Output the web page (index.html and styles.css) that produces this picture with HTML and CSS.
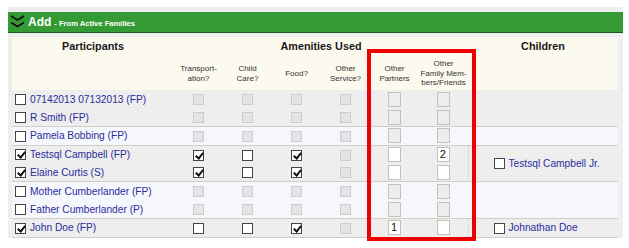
FILE: index.html
```html
<!DOCTYPE html>
<html lang="en">

<head>
    <meta charset="UTF-8">
    <meta name="viewport" content="width=device-width, initial-scale=1.0">
    <title>Add - From Active Families</title>
    <link rel="stylesheet" href="styles.css">
</head>

<body>
    <div class="top-strip"></div>

    <div class="panel">
        <div class="panel-bar">
            <svg class="chevrons" width="15" height="14" viewBox="0 0 15 14">
                <polyline points="1,1 7.5,5 14,1" />
                <polyline points="1,7.5 7.5,11.5 14,7.5" />
            </svg>
            <span class="bar-title">Add</span>
            <span class="bar-sub">- From Active Families</span>
        </div>

        <table class="roster">
            <colgroup>
                <col class="col-name">
                <col class="col-amenity">
                <col class="col-amenity">
                <col class="col-amenity">
                <col class="col-amenity">
                <col class="col-amenity">
                <col class="col-amenity">
                <col class="col-children">
            </colgroup>
            <thead>
                <tr class="head-main">
                    <th>Participants</th>
                    <th colspan="6">Amenities Used</th>
                    <th>Children</th>
                </tr>
                <tr class="head-sub">
                    <th></th>
                    <th>Transport-<br>ation?</th>
                    <th>Child<br>Care?</th>
                    <th>Food?</th>
                    <th>Other<br>Service?</th>
                    <th>Other<br>Partners</th>
                    <th>Other<br>Family Mem-<br>bers/Friends</th>
                    <th></th>
                </tr>
            </thead>

            <!-- family 1 -->
            <tbody class="family">
                <tr>
                    <td class="name"><span class="cb"></span>07142013 07132013 (FP)</td>
                    <td><span class="cb off"></span></td>
                    <td><span class="cb off"></span></td>
                    <td><span class="cb off"></span></td>
                    <td><span class="cb off"></span></td>
                    <td><span class="tb off"></span></td>
                    <td><span class="tb off"></span></td>
                    <td rowspan="2"></td>
                </tr>
                <tr>
                    <td class="name"><span class="cb"></span>R Smith (FP)</td>
                    <td><span class="cb off"></span></td>
                    <td><span class="cb off"></span></td>
                    <td><span class="cb off"></span></td>
                    <td><span class="cb off"></span></td>
                    <td><span class="tb off"></span></td>
                    <td><span class="tb off"></span></td>
                </tr>
            </tbody>

            <!-- family 2 -->
            <tbody class="family alt">
                <tr>
                    <td class="name"><span class="cb"></span>Pamela Bobbing (FP)</td>
                    <td><span class="cb off"></span></td>
                    <td><span class="cb off"></span></td>
                    <td><span class="cb off"></span></td>
                    <td><span class="cb off"></span></td>
                    <td><span class="tb off"></span></td>
                    <td><span class="tb off"></span></td>
                    <td></td>
                </tr>
            </tbody>

            <!-- family 3 -->
            <tbody class="family">
                <tr>
                    <td class="name"><span class="cb on"></span>Testsql Campbell (FP)</td>
                    <td><span class="cb on"></span></td>
                    <td><span class="cb"></span></td>
                    <td><span class="cb on"></span></td>
                    <td><span class="cb off"></span></td>
                    <td><span class="tb"></span></td>
                    <td><span class="tb">2</span></td>
                    <td class="child" rowspan="2"><span class="cb"></span>Testsql Campbell Jr.</td>
                </tr>
                <tr>
                    <td class="name"><span class="cb on"></span>Elaine Curtis (S)</td>
                    <td><span class="cb on"></span></td>
                    <td><span class="cb"></span></td>
                    <td><span class="cb on"></span></td>
                    <td><span class="cb off"></span></td>
                    <td><span class="tb"></span></td>
                    <td><span class="tb"></span></td>
                </tr>
            </tbody>

            <!-- family 4 -->
            <tbody class="family alt">
                <tr>
                    <td class="name"><span class="cb"></span>Mother Cumberlander (FP)</td>
                    <td><span class="cb off"></span></td>
                    <td><span class="cb off"></span></td>
                    <td><span class="cb off"></span></td>
                    <td><span class="cb off"></span></td>
                    <td><span class="tb off"></span></td>
                    <td><span class="tb off"></span></td>
                    <td rowspan="2"></td>
                </tr>
                <tr>
                    <td class="name"><span class="cb"></span>Father Cumberlander (P)</td>
                    <td><span class="cb off"></span></td>
                    <td><span class="cb off"></span></td>
                    <td><span class="cb off"></span></td>
                    <td><span class="cb off"></span></td>
                    <td><span class="tb off"></span></td>
                    <td><span class="tb off"></span></td>
                </tr>
            </tbody>

            <!-- family 5 -->
            <tbody class="family">
                <tr>
                    <td class="name"><span class="cb on"></span>John Doe (FP)</td>
                    <td><span class="cb"></span></td>
                    <td><span class="cb"></span></td>
                    <td><span class="cb on"></span></td>
                    <td><span class="cb off"></span></td>
                    <td><span class="tb">1</span></td>
                    <td><span class="tb"></span></td>
                    <td class="child"><span class="cb"></span>Johnathan Doe</td>
                </tr>
            </tbody>
        </table>

        <div class="highlight"></div>
    </div>
</body>

</html>
```

FILE: styles.css
```css
:root {
    --bar-green: #349b34;
    --bar-border: #1e5a1e;
    --panel-gray: #eeeeee;
    --head-cream: #fcf9ef;
    --row-alt: #f6f7fd;
    --group-line: #d2cec3;
    --link-blue: #2b2b9b;
    --mark-red: #f00000;
}

* {
    margin: 0;
    padding: 0;
    box-sizing: border-box;
}

body {
    font-family: "Liberation Sans", Arial, sans-serif;
    background-color: #ffffff;
    color: #222222;
    margin: 0 6px 0 8px;
    min-height: 248px;
}

.top-strip {
    height: 7px;
}

.panel {
    position: relative;
    width: 615px;
    background-color: var(--panel-gray);
    padding: 5px 5px 0 4px;
}

.panel-bar {
    display: flex;
    align-items: center;
    height: 21px;
    margin: 0 -5px 4px -4px;
    padding-left: 2px;
    background-color: var(--bar-green);
    border-bottom: 1px solid var(--bar-border);
    color: #ffffff;
    font-weight: bold;
}

.chevrons {
    fill: none;
    stroke: #111111;
    stroke-width: 1.8;
    margin-right: 3px;
}

.bar-title {
    font-size: 12px;
    margin-right: 3px;
}

.bar-sub {
    font-size: 7.6px;
    padding-top: 2px;
}

/* roster table */

.roster {
    width: 606px;
    border-collapse: collapse;
    table-layout: fixed;
    font-size: 10.2px;
}

.col-name {
    width: 162px;
}

.col-amenity {
    width: 49px;
}

.col-children {
    width: 150px;
}

.roster thead {
    background-color: var(--head-cream);
}

.head-main th {
    height: 18px;
    font-size: 10.8px;
    font-weight: bold;
    color: #1a1a1a;
    padding-top: 0;
}

.head-sub th {
    height: 35px;
    font-size: 8px;
    font-weight: normal;
    line-height: 9.5px;
    color: #333333;
    vertical-align: middle;
    padding-top: 2px;
}

.family {
    border-bottom: 1px solid var(--group-line);
}

.family.alt {
    background-color: var(--row-alt);
    border-top: 1px solid var(--group-line);
}

.family td {
    height: 18.4px;
    text-align: center;
    vertical-align: middle;
}

.family td.name {
    text-align: left;
    padding-left: 3px;
    color: var(--link-blue);
    white-space: nowrap;
}

.family td.child {
    text-align: left;
    padding-left: 25px;
    color: var(--link-blue);
    border-left: 1px dotted #cfcfcf;
}

/* check boxes */

.cb {
    position: relative;
    display: inline-block;
    width: 11px;
    height: 11px;
    border: 1px solid #454545;
    background-color: #ffffff;
    vertical-align: middle;
}

.name .cb,
.child .cb {
    margin: -1px 4px 0 0;
}

.cb.off {
    border-color: #cdcdcd;
    background-color: #e4e4e4;
}

.cb.on::after {
    content: "";
    position: absolute;
    left: 3px;
    top: 0;
    width: 3px;
    height: 6px;
    border-right: 2px solid #111111;
    border-bottom: 2px solid #111111;
    transform: rotate(40deg);
}

/* small text boxes */

.tb {
    display: inline-block;
    width: 13px;
    height: 15px;
    border: 1px solid #c4c1b6;
    background-color: #ffffff;
    vertical-align: middle;
    font-size: 11px;
    line-height: 13px;
    text-align: left;
    padding-left: 2px;
    color: #111111;
}

.tb.off {
    background-color: #ededed;
}

.highlight {
    position: absolute;
    left: 359px;
    top: 42px;
    width: 109px;
    height: 192px;
    border: 4px solid var(--mark-red);
}
```
